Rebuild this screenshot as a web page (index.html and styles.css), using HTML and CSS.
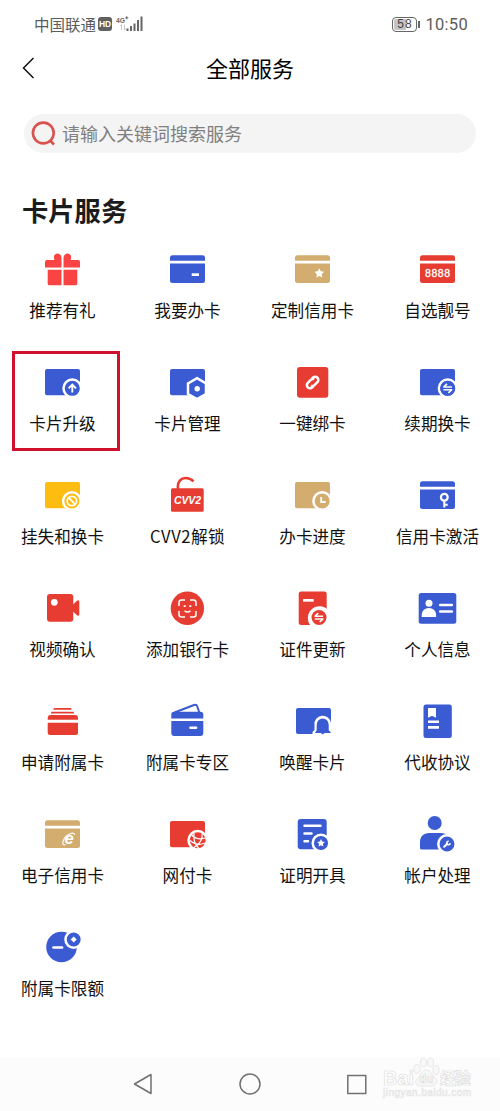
FILE: index.html
```html
<!DOCTYPE html>
<html lang="zh-CN">
<head>
    <meta charset="UTF-8">
    <meta name="viewport" content="width=device-width, initial-scale=1.0">
    <title>全部服务</title>
    <link rel="stylesheet" href="styles.css">
</head>
<body>
<svg class="defs">
    <symbol id="card" viewBox="0 0 45 44">
        <path d="M5 12.7V9.8a2.5 2.5 0 0 1 2.5-2.5h30A2.5 2.5 0 0 1 40 9.8V12.7zM5 15.5H40V32.5a2.5 2.5 0 0 1-2.5 2.5h-30A2.5 2.5 0 0 1 5 32.5z"/>
    </symbol>
    <symbol id="plate" viewBox="0 0 45 44">
        <rect x="5" y="8" width="35" height="26.3" rx="2"/>
    </symbol>
    <symbol id="swap" viewBox="0 0 16 16">
        <circle cx="8" cy="8" r="7.5"/>
        <path class="line" d="M3.5 6.7H12.2M7.3 3.6L4.2 6.5M3.8 9.5H12.5M8.7 12.5L11.8 9.7" stroke-width="1.6"/>
    </symbol>
</svg>
<div class="status">
    <span class="carrier">中国联通</span>
    <span class="hd">HD</span>
    <svg class="signal" width="28" height="18">
        <text x="0" y="7.5" font-size="8" textLength="9" lengthAdjust="spacingAndGlyphs">4G</text>
        <path d="M9.3 2.800h3M10.800 1.300v3" stroke="#666" stroke-width="1"/>
        <path d="M5.500 15V9.5l-1.500 1.800M8.500 9.5V15l1.500-1.800" stroke="#bbb" stroke-width=".8" fill="none"/>
        <path d="M11.5 16v-2.500M15 16v-5M18.500 16V8.500M22 16V5M25.500 16V1.500" stroke="#666" stroke-width="2"/>
    </svg>
    <div class="battery"><span>58</span></div>
    <span class="time">10:50</span>
</div>
<div class="header">
    <svg class="back" width="14" height="24"><path d="M12.5 2L2.500 12l10 10" fill="none" stroke="#111" stroke-width="1.500"/></svg>
    <h1>全部服务</h1>
</div>
<div class="search">
    <svg width="26" height="26"><circle cx="12.3" cy="12" r="10.400"/><path d="M18.500 19l4.500 4.500"/></svg>
    <span>请输入关键词搜索服务</span>
</div>
<h2>卡片服务</h2>
<div class="grid">
    <div class="item">
        <svg class="icon coral" viewBox="0 0 45 44">
            <path d="M7 12h7.5c-1.500-3.500 0-6.500 3-6.500 2.500 0 4 2 4 5v9H5V14a2 2 0 0 1 2-2zM38 12h-7.500c1.500-3.500 0-6.500-3-6.500-2.500 0-4 2-4 5v9H40V14a2 2 0 0 0-2-2zM7.700 21.700H21.500V37.300H9.200a1.500 1.500 0 0 1-1.500-1.500zM23.500 21.700H37.300V35.800a1.500 1.500 0 0 1-1.500 1.500H23.500z"/>
        </svg>
        <span>推荐有礼</span>
    </div>
    <div class="item">
        <svg class="icon blue" viewBox="0 0 45 44">
            <use href="#card"/>
            <path class="white" d="M26.700 25.300h7.300v2.700h-7.300z"/>
        </svg>
        <span>我要办卡</span>
    </div>
    <div class="item">
        <svg class="icon tan" viewBox="0 0 45 44">
            <use href="#card"/>
            <path class="white" d="M29.300 20.300l1.500 3 3.400.5-2.500 2.400.6 3.400-3-1.600-3 1.600.6-3.400-2.500-2.400 3.400-.5z"/>
        </svg>
        <span>定制信用卡</span>
    </div>
    <div class="item">
        <svg class="icon red" viewBox="0 0 45 44">
            <use href="#card"/>
            <text class="white" x="10" y="28.700" font-size="10.500" textLength="25" stroke="#fff" stroke-width=".3">8888</text>
        </svg>
        <span>自选靓号</span>
    </div>
    <div class="item active">
        <svg class="icon blue" viewBox="0 0 45 44">
            <use href="#plate"/>
            <circle class="ring" cx="32.300" cy="27.300" r="8.800"/>
            <path class="line" d="M32.300 31.500v-7.500M28.600 27.300l3.700-3.700 3.700 3.700" stroke-width="1.900"/>
        </svg>
        <span>卡片升级</span>
    </div>
    <div class="item">
        <svg class="icon blue" viewBox="0 0 45 44">
            <use href="#plate"/>
            <path class="ring" d="M32 17.200l9 5.200v10.600l-9 5.200-9-5.200V22.400z"/>
            <circle class="white" cx="32.200" cy="27.700" r="2.700"/>
        </svg>
        <span>卡片管理</span>
    </div>
    <div class="item">
        <svg class="icon red" viewBox="0 0 45 44">
            <rect x="7" y="6" width="31.300" height="30.700" rx="3"/>
            <g transform="rotate(-45 22.600 21.500)" class="line" stroke-width="2.500">
                <path d="M20.500 24.700h-1.500a3.200 3.200 0 0 1 0-6.400h4.500a2.600 2.600 0 0 1 2.300 2.200M24.700 18.300h1.500a3.200 3.200 0 0 1 0 6.400h-4.500a2.600 2.600 0 0 1-2.300-2.200"/>
            </g>
        </svg>
        <span>一键绑卡</span>
    </div>
    <div class="item">
        <svg class="icon blue" viewBox="0 0 45 44">
            <use href="#plate"/>
            <circle class="ring" cx="32.700" cy="27.300" r="8.800"/>
            <use href="#swap" x="24.700" y="19.300" width="16" height="16"/>
        </svg>
        <span>续期换卡</span>
    </div>
    <div class="item">
        <svg class="icon yellow" viewBox="0 0 45 44">
            <use href="#plate"/>
            <circle class="ring" cx="31.900" cy="27" r="8.800"/>
            <circle class="line" cx="31.900" cy="27" r="4.700" stroke-width="1.700"/>
            <path class="line" d="M28.600 23.700l6.600 6.600" stroke-width="1.900"/>
        </svg>
        <span>挂失和换卡</span>
    </div>
    <div class="item">
        <svg class="icon red" viewBox="0 0 45 44">
            <rect x="6" y="14.300" width="32.700" height="23.400" rx="1.500"/>
            <path d="M12.900 15V12.500C12.900 7.500 16 4 20.500 4c3.500 0 6 1.300 8 3.300" fill="none" stroke="#e63c32" stroke-width="2.600"/>
            <text class="white" x="9" y="29.800" font-size="10.500" font-weight="bold" font-style="italic" textLength="27">CVV2</text>
        </svg>
        <span class="latin">CVV2解锁</span>
    </div>
    <div class="item">
        <svg class="icon tan" viewBox="0 0 45 44">
            <use href="#plate"/>
            <circle class="ring" cx="32.200" cy="27" r="8.800"/>
            <path class="line" d="M31.200 23v5h4.500" stroke-width="1.800"/>
        </svg>
        <span>办卡进度</span>
    </div>
    <div class="item">
        <svg class="icon blue" viewBox="0 0 45 44">
            <use href="#card"/>
            <circle class="line" cx="29.300" cy="23.300" r="3.400" stroke-width="2.200"/>
            <path class="line" d="M29.300 27v6.500M29.300 30.800h3.400" stroke-width="2"/>
        </svg>
        <span>信用卡激活</span>
    </div>
    <div class="item">
        <svg class="icon red" viewBox="0 0 45 44">
            <rect x="7" y="7" width="26.300" height="27.700" rx="3"/>
            <path d="M33 17.500l4.300-3.900q2-1 2 1.200v12.500q0 2-2 1.200L33 24.500z"/>
            <circle class="white" cx="14.300" cy="15.300" r="3.400"/>
        </svg>
        <span>视频确认</span>
    </div>
    <div class="item">
        <svg class="icon red" viewBox="0 0 45 44">
            <circle cx="22.400" cy="21.300" r="16.700"/>
            <path class="line" d="M14 19v-3.500q0-2.500 2.500-2.500H20M25 13h3.500q2.500 0 2.500 2.500V19M31 24v3.500q0 2.500-2.500 2.500H25M20 30h-3.500q-2.500 0-2.500-2.500V24M19.500 23.700q3 2.600 6 0" stroke-width="1.500"/>
            <path class="white" d="M18.700 18.200h2v1.900h-2zM24.300 18.200h2v1.900h-2z"/>
        </svg>
        <span>添加银行卡</span>
    </div>
    <div class="item">
        <svg class="icon red" viewBox="0 0 45 44">
            <rect x="8.700" y="4.500" width="28" height="33.500" rx="2.500"/>
            <path class="white" d="M13 12h10.700v2.700H13z"/>
            <path class="white" d="M21 39a10.500 10.500 0 0 1 17-16v16z"/>
            <use href="#swap" x="21" y="22.500" width="16" height="16"/>
        </svg>
        <span>证件更新</span>
    </div>
    <div class="item">
        <svg class="icon blue" viewBox="0 0 45 44">
            <rect x="3.700" y="6" width="37.600" height="30.700" rx="2.500"/>
            <circle class="white" cx="14" cy="16.300" r="3.500"/>
            <path class="white" d="M6.700 30v-2c0-4 3-7 7.200-7s7.200 3 7.200 7v2z"/>
            <path class="line round" d="M25.300 18h11.500M25.300 24.500h11.500" stroke-width="2.700"/>
        </svg>
        <span>个人信息</span>
    </div>
    <div class="item">
        <svg class="icon red" viewBox="0 0 45 44">
            <path d="M14 8h17l.7 1.800H13.300zM11.500 11.700h22l.8 1.900H10.700zM7.700 19.700V18a3 3 0 0 1 3-3H35a3 3 0 0 1 3 3v1.700zM7.700 22.700H38v9.800a2.500 2.500 0 0 1-2.500 2.500H10.200a2.500 2.500 0 0 1-2.500-2.500z"/>
        </svg>
        <span>申请附属卡</span>
    </div>
    <div class="item">
        <svg class="icon blue" viewBox="0 0 45 44">
            <path d="M6.300 18.500V14.500a2.800 2.800 0 0 1 2.800-2.800H35.500a2.800 2.800 0 0 1 2.800 2.800v4zM6.300 21H38.300v12a3 3 0 0 1-3 3H9.300a3 3 0 0 1-3-3z"/>
            <path d="M9.500 12.500L29 5q2.500-.8 3.300 1.500l2 6" fill="none" stroke="#3b5bd3" stroke-width="2"/>
            <path class="line round" d="M25.500 27.800h5.500" stroke-width="2.600"/>
        </svg>
        <span>附属卡专区</span>
    </div>
    <div class="item">
        <svg class="icon blue" viewBox="0 0 45 44">
            <rect x="6" y="8" width="35" height="26" rx="2"/>
            <path class="white" d="M22.500 36v-4l2-2v-5a8.200 8.200 0 0 1 16.500-2v13z"/>
            <path d="M25.200 32.300l1.500-2v-5.500a6 6.300 0 0 1 12 0v5.500l2 2v.8H34.500l-1.800 1.300-1.800-1.300h-5.700z"/>
        </svg>
        <span>唤醒卡片</span>
    </div>
    <div class="item">
        <svg class="icon blue" viewBox="0 0 45 44">
            <rect x="8.500" y="4.500" width="28.300" height="33.500" rx="2.500"/>
            <path class="white" d="M13 8h8v9.700l-4-2-4 2zM13 20.400h11V23H13zM13 26h11v2.700H13z"/>
        </svg>
        <span>代收协议</span>
    </div>
    <div class="item">
        <svg class="icon tan" viewBox="0 0 45 44">
            <use href="#card"/>
            <text class="white" x="24.600" y="30.500" font-size="16.500" font-weight="bold" font-style="italic">e</text>
            <path class="line" d="M25.500 31.500c-5.500 2-2-8 4-10.500 3-1.200 5.300-1.200 5 1" stroke-width="1.200"/>
        </svg>
        <span>电子信用卡</span>
    </div>
    <div class="item">
        <svg class="icon red" viewBox="0 0 45 44">
            <use href="#plate"/>
            <circle class="ring" cx="32.700" cy="27.300" r="9.200"/>
            <path class="line" d="M26.500 22q5.500 5.500 14 3M29 20q-1 10.500 5 15.500M37 20.500q1.500 8-8 14M25 27.500q7 6 15 2.500" stroke-width="1.200"/>
        </svg>
        <span>网付卡</span>
    </div>
    <div class="item">
        <svg class="icon blue" viewBox="0 0 45 44">
            <rect x="7.700" y="6" width="29" height="30.300" rx="3"/>
            <path class="line round" d="M14.500 12.700h16M14.500 20.400h7M14.500 28.300h3.500" stroke-width="2.500"/>
            <circle class="ring" cx="31" cy="30" r="8.300"/>
            <path class="white" d="M31 26l1.200 2.500 2.700.4-2 1.900.5 2.700-2.400-1.300-2.400 1.300.5-2.700-2-1.900 2.700-.4z"/>
        </svg>
        <span>证明开具</span>
    </div>
    <div class="item">
        <svg class="icon blue" viewBox="0 0 45 44">
            <circle cx="19.700" cy="10" r="7"/>
            <path d="M5 35V29c0-5.500 3.500-9 9-9h12c3 0 5 1 6.500 3v13.500H6.500A1.500 1.500 0 0 1 5 35z"/>
            <circle class="ring" cx="32" cy="31" r="8.700"/>
            <path class="line round" d="M29.200 33.800l3-3" stroke-width="2"/>
            <path class="line" d="M33.700 28.200a1.800 1.800 0 1 0 1.600 2" stroke-width="1.500"/>
        </svg>
        <span>帐户处理</span>
    </div>
    <div class="item">
        <svg class="icon blue" viewBox="0 0 45 44">
            <circle cx="21.500" cy="21" r="15.300"/>
            <path class="line round" d="M13.500 21.500h8.500" stroke-width="2.700"/>
            <circle class="ring" cx="33.700" cy="13.500" r="8.200"/>
            <path class="white" d="M33.700 10.500l3 3-3 3-3-3z"/>
        </svg>
        <span>附属卡限额</span>
    </div>
</div>
<div class="navbar">
    <svg width="20" height="24"><path d="M18 2.500v19L1.500 12z"/></svg>
    <svg width="24" height="24"><circle cx="12" cy="12" r="10"/></svg>
    <svg width="20" height="24"><rect x="0.800" y="3.500" width="18" height="18"/></svg>
    <svg class="watermark" width="96" height="46">
        <g class="paw">
            <ellipse cx="36" cy="13" rx="3" ry="4.500"/>
            <ellipse cx="42.500" cy="6.500" rx="3" ry="4.500"/>
            <ellipse cx="49.500" cy="6.500" rx="3" ry="4.500"/>
            <ellipse cx="55" cy="14" rx="3" ry="4.500"/>
            <path d="M45 14c5 0 5 5 10 9 2 4-1 7-5 7H40c-5 0-7-4-4-7 5-4 4-9 9-9z"/>
        </g>
        <text x="2" y="29" font-size="20" font-weight="bold" textLength="31">Bai</text>
        <text x="38" y="27" font-size="12" font-weight="bold">du</text>
        <text x="59" y="28" font-size="16" font-weight="bold" textLength="31">经验</text>
        <text class="url" x="2" y="40" font-size="10" textLength="88">jingyan.baidu.com</text>
    </svg>
</div>
</body>
</html>
```
FILE: styles.css
```css
body {
    margin: 0;
    height: 1111px;
    display: flex;
    flex-direction: column;
    background: #fff;
    color: #111;
    font-family: "Noto Sans CJK SC", sans-serif;
    overflow: hidden;
}

h1, h2 {
    margin: 0;
}

.defs {
    display: none;
}

.status {
    display: flex;
    align-items: center;
    height: 48px;
    padding: 0 32px 0 34px;
    color: #5c5c5c;
}

.carrier {
    margin-top: -1px;
    font-size: 15.5px;
}

.hd {
    width: 14px;
    height: 14px;
    margin: 0 4px 0 2px;
    border-radius: 3px;
    background: #606060;
    color: #fff;
    font: bold 8.5px/14px "Liberation Sans", sans-serif;
    text-align: center;
}

.signal {
    fill: #666;
    font-family: "Liberation Sans", sans-serif;
    font-weight: bold;
}

.battery {
    position: relative;
    box-sizing: border-box;
    width: 25px;
    height: 15px;
    margin: 0 8px 0 auto;
    padding: 1px;
    border: 1px solid #666;
    border-radius: 4px;
    font: 12px/11px "Liberation Sans", sans-serif;
    text-align: center;
    letter-spacing: 1px;
    color: #444;
}

.battery span {
    display: block;
    background: linear-gradient(90deg, #c4c4c4 58%, #fff 58%);
    border-radius: 2px;
}

.battery::after {
    content: "";
    position: absolute;
    right: -4px;
    top: 3px;
    width: 2px;
    height: 7px;
    background: #666;
}

.time {
    font-family: Roboto, sans-serif;
    font-size: 16.5px;
    letter-spacing: 0.3px;
}

.header {
    display: flex;
    align-items: center;
    height: 40px;
    padding: 0 21px;
}

.header h1 {
    flex: 1;
    margin: -3px 14px 0 0;
    text-align: center;
    font-size: 22px;
    font-weight: 400;
    color: #000;
}

.search {
    display: flex;
    align-items: center;
    gap: 5px;
    box-sizing: border-box;
    height: 39px;
    margin: 26px 24px 0;
    padding-left: 7px;
    border-radius: 20px;
    background: #f4f4f4;
    color: #808080;
    font-size: 18px;
}

.search span {
    margin-top: -2px;
}

.search svg {
    fill: none;
    stroke: #d9534f;
    stroke-width: 2.6;
}

h2 {
    height: 40px;
    margin: 37px 0 0 22px;
    font-size: 26.3px;
    line-height: 40px;
    font-weight: 700;
    color: #1c1c1c;
}

.grid {
    display: grid;
    grid-template-columns: repeat(4, 125px);
    grid-auto-rows: 113px;
    margin-top: 18px;
}

.item {
    position: relative;
    display: flex;
    flex-direction: column;
    align-items: center;
    font-size: 16.6px;
    line-height: 24px;
    white-space: nowrap;
}

.item span {
    margin-top: 5.5px;
}

.item .latin {
    letter-spacing: 0.5px;
}

.active::after {
    content: "";
    position: absolute;
    box-sizing: border-box;
    left: 12px;
    top: -10px;
    width: 108px;
    height: 100px;
    border: 3px solid #d0112b;
}

.icon {
    width: 45px;
    height: 44px;
    font-family: "Liberation Sans", sans-serif;
}

.blue {
    fill: #3b5bd3;
}

.red {
    fill: #e63c32;
}

.coral {
    fill: #fa4343;
}

.tan {
    fill: #d3ac70;
}

.yellow {
    fill: #fdbc10;
}

.white {
    fill: #fff;
}

.line {
    fill: none;
    stroke: #fff;
}

.round {
    stroke-linecap: round;
}

.ring {
    stroke: #fff;
    stroke-width: 2.5;
}

.navbar {
    position: relative;
    display: flex;
    justify-content: center;
    align-items: center;
    gap: 85px;
    height: 54px;
    margin-top: auto;
    background: #fcfcfc;
}

.navbar svg {
    fill: none;
    stroke: #707070;
    stroke-width: 1.5;
    stroke-linejoin: round;
}

.navbar .watermark {
    position: absolute;
    left: 381px;
    top: -1px;
    fill: #fff;
    stroke: #dedede;
    stroke-width: 0.7;
    font-family: "Liberation Sans", "Noto Sans CJK SC", sans-serif;
}

.watermark .paw {
    fill: #f8f8f8;
}

.watermark .url {
    stroke: #e6e6e6;
}
```
